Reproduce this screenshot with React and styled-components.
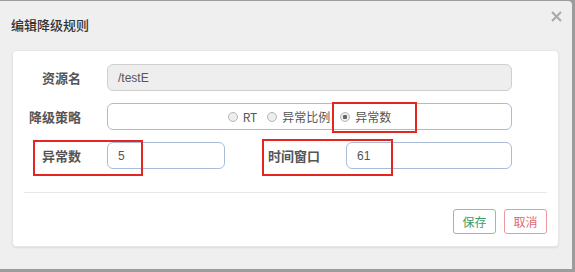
import React from 'react';
import styled, { createGlobalStyle } from 'styled-components';

const GlobalStyle = createGlobalStyle`
  html, body {
    margin: 0;
    padding: 0;
    background: #9c9c9c;
    font-family: 'Liberation Sans', 'Noto Sans CJK SC', sans-serif;
  }
`;

const Modal = styled.div`
  position: relative;
  width: 572px;
  height: 268px;
  margin-top: 1px;
  background: #f0eff0;
  border-top-right-radius: 4px;
`;

const Header = styled.div`
  display: flex;
  justify-content: space-between;
  align-items: center;
  height: 49px;
  padding: 0 10px 0 11px;
  box-sizing: border-box;
  h4 {
    margin: 0 0 2px;
    font-size: 13px;
    font-weight: 500;
    color: #333;
    font-family: 'Noto Sans CJK SC', sans-serif;
  }
`;

const Close = styled.span`
  display: flex;
  margin-bottom: 18px;
  svg {
    width: 11px;
    height: 11px;
  }
`;

const Card = styled.div`
  position: relative;
  margin-left: 12px;
  width: 547px;
  height: 197px;
  box-sizing: border-box;
  background: #fff;
  border: 1px solid #e6e6e6;
  border-radius: 4px;
  box-shadow: 0 1px 2px rgba(0, 0, 0, 0.08);
  padding-top: 13px;
`;

const Row = styled.div`
  display: flex;
  align-items: center;
  margin-bottom: 12px;
`;

const Label = styled.label`
  width: ${(p) => p.$width}px;
  text-align: right;
  margin-right: 26px;
  font-family: 'Noto Sans CJK SC', sans-serif;
  font-size: 13px;
  font-weight: 700;
  color: #555;
  flex-shrink: 0;
`;

const Input = styled.div`
  width: ${(p) => p.$width}px;
  height: 27px;
  box-sizing: border-box;
  display: flex;
  align-items: center;
  justify-content: ${(p) => (p.$center ? 'center' : 'flex-start')};
  padding-left: ${(p) => (p.$center ? 0 : 10)}px;
  border: 1px solid ${(p) => (p.$disabled ? '#cfcfcf' : '#a9bdd8')};
  background: ${(p) => (p.$disabled ? '#eeeeee' : '#fff')};
  border-radius: 6px;
  font-size: 12px;
  color: #555;
  flex-shrink: 0;
`;

const Radio = styled.span`
  display: flex;
  align-items: center;
  margin: 0 5px;
  font-family: 'Noto Sans CJK SC', sans-serif;
  font-size: 12px;
  color: #555;
  i {
    width: 8px;
    height: 8px;
    border-radius: 50%;
    border: 1px solid #b5b5b5;
    background: radial-gradient(circle, ${(p) => (p.$checked ? '#666 0 2px' : '#eee 0 2px')}, #eee 2.5px);
    margin-right: 5px;
  }
`;

const Divider = styled.div`
  margin: 23px 11px 0;
  height: 1px;
  background: #e8e8e8;
`;

const Footer = styled.div`
  display: flex;
  justify-content: flex-end;
  gap: 8px;
  padding: 16px 11px 0 0;
`;

const Button = styled.button`
  width: 43px;
  height: 25px;
  background: #fff;
  border: 1px solid ${(p) => (p.$danger ? '#eb9aa0' : '#86c69b')};
  color: ${(p) => (p.$danger ? '#e06770' : '#3f9a5f')};
  border-radius: 3px;
  font-family: 'Noto Sans CJK SC', sans-serif;
  font-size: 12px;
  padding: 0;
`;

const Mark = styled.div`
  position: absolute;
  left: ${(p) => p.$x}px;
  top: ${(p) => p.$y}px;
  width: ${(p) => p.$w}px;
  height: ${(p) => p.$h}px;
  box-sizing: border-box;
  border: 2px solid #e3261f;
  pointer-events: none;
`;

export default function App() {
  return (
    <>
      <GlobalStyle />
      <Modal>
        <Header>
          <h4>编辑降级规则</h4>
          <Close>
            <svg viewBox="0 0 11 11">
              <path d="M1 1L10 10M10 1L1 10" stroke="#a8a8a8" strokeWidth="2" />
            </svg>
          </Close>
        </Header>
        <Card>
          <Row>
            <Label $width={68}>资源名</Label>
            <Input $width={405} $disabled>/testE</Input>
          </Row>
          <Row>
            <Label $width={68}>降级策略</Label>
            <Input $width={405} $center>
              <Radio>
                <i />RT
              </Radio>
              <Radio>
                <i />异常比例
              </Radio>
              <Radio $checked>
                <i />异常数
              </Radio>
            </Input>
          </Row>
          <Row>
            <Label $width={68}>异常数</Label>
            <Input $width={118}>5</Input>
            <Label $width={95}>时间窗口</Label>
            <Input $width={166}>61</Input>
          </Row>
          <Divider />
          <Footer>
            <Button>保存</Button>
            <Button $danger>取消</Button>
          </Footer>
        </Card>
        <Mark $x={332} $y={101} $w={85} $h={31} />
        <Mark $x={33} $y={139} $w={110} $h={36} />
        <Mark $x={262} $y={138} $w={131} $h={37} />
      </Modal>
    </>
  );
}
